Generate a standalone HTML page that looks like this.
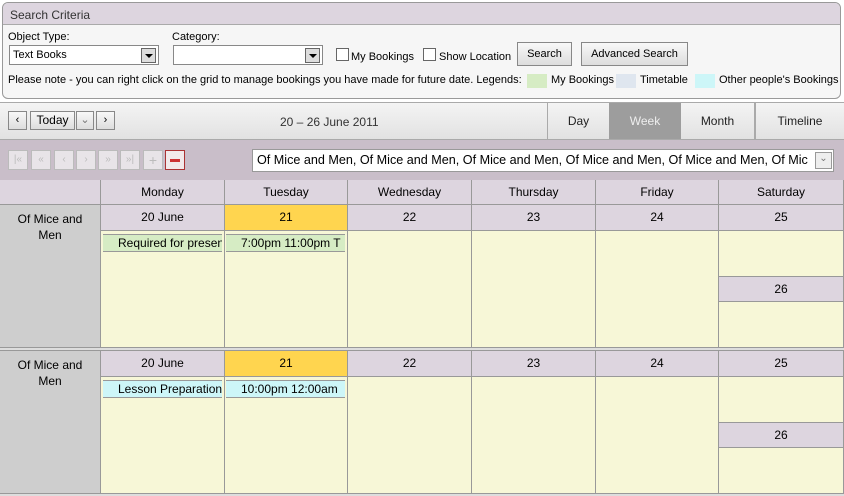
<!DOCTYPE html><html><head><style>
*{box-sizing:border-box;margin:0;padding:0}
body{width:844px;height:496px;position:relative;background:#fff;font-family:"Liberation Sans",Arial,sans-serif;font-size:12px;color:#000;overflow:hidden}
.a{position:absolute}
.btn{position:absolute;border:1px solid #888;background:linear-gradient(#f8f8f8,#ddd);font-size:11px;text-align:center}
.c{position:absolute;text-align:center;border-right:1px solid #999;border-bottom:1px solid #999}
.dd{position:absolute;width:15px;height:15px;border:1px solid #666;background:#ddd;top:2px;right:2px}
.dd:after{content:"";position:absolute;left:3px;top:5px;border:4px solid transparent;border-top:4px solid #000}
.nb{position:absolute;top:150px;width:20px;height:20px;border:1px solid #bbb;background:#e8e4e8;color:#bbb;font-size:10px;text-align:center;line-height:18px}
.ev{position:absolute;height:18px;border-top:1px solid #999;border-bottom:1px solid #999;font-size:12px;white-space:nowrap;overflow:hidden;line-height:16px;padding-left:15px}
</style></head><body>
<div class="a" style="left:2px;top:2px;width:839px;height:97px;border:1px solid #999;border-radius:6px;background:#f6f6f6;overflow:hidden">
<div class="a" style="left:0;top:0;width:100%;height:22px;background:#ddd5df;border-bottom:1px solid #aaa;color:#333;font-size:12px;padding:5px 0 0 7px">Search Criteria</div>
<div class="a" style="left:5px;top:28px;font-size:11px">Object Type:</div>
<div class="a" style="left:169px;top:28px;font-size:11px">Category:</div>
<div class="a" style="left:6px;top:42px;width:150px;height:20px;border:1px solid #888;background:#fff;font-size:11px;padding:3px 0 0 3px">Text Books<div class="dd"></div></div>
<div class="a" style="left:170px;top:42px;width:150px;height:20px;border:1px solid #888;background:#fff"><div class="dd"></div></div>
<div class="a" style="left:333px;top:45px;width:13px;height:13px;border:1px solid #666;background:#fff"></div>
<div class="a" style="left:348px;top:48px;font-size:11px">My Bookings</div>
<div class="a" style="left:420px;top:45px;width:13px;height:13px;border:1px solid #666;background:#fff"></div>
<div class="a" style="left:436px;top:48px;font-size:11px">Show Location</div>
<div class="btn" style="left:514px;top:39px;width:55px;height:24px;padding-top:5px">Search</div>
<div class="btn" style="left:578px;top:39px;width:107px;height:24px;padding-top:5px">Advanced Search</div>
<div class="a" style="left:5px;top:71px;font-size:11px;white-space:nowrap">Please note - you can right click on the grid to manage bookings you have made for future date. Legends:</div>
<div class="a" style="left:524px;top:71px;width:20px;height:14px;background:#d6ecc4"></div>
<div class="a" style="left:548px;top:71px;font-size:11px">My Bookings</div>
<div class="a" style="left:613px;top:71px;width:20px;height:14px;background:#dfe6ef"></div>
<div class="a" style="left:637px;top:71px;font-size:11px">Timetable</div>
<div class="a" style="left:692px;top:71px;width:20px;height:14px;background:#cdf6f8"></div>
<div class="a" style="left:716px;top:71px;font-size:11px">Other people's Bookings</div>
</div>
<div class="a" style="left:0;top:102px;width:844px;height:38px;background:linear-gradient(#f4f4f4,#e2e2e2);border-top:1px solid #aaa;border-bottom:1px solid #aaa"></div>
<div class="btn" style="left:8px;top:111px;width:19px;height:19px;line-height:16px">&lsaquo;</div>
<div class="btn" style="left:30px;top:111px;width:45px;height:19px;line-height:16px;font-size:12px">Today</div>
<div class="btn" style="left:76px;top:111px;width:18px;height:19px;line-height:16px;color:#777">&#8964;</div>
<div class="btn" style="left:96px;top:111px;width:19px;height:19px;line-height:16px">&rsaquo;</div>
<div class="a" style="left:280px;top:115px;color:#333">20 – 26 June 2011</div>
<div class="a" style="left:547px;top:103px;width:62px;height:36px;border-left:1px solid #aaa;text-align:center;line-height:36px;color:#222">Day</div>
<div class="a" style="left:609px;top:103px;width:72px;height:36px;background:#9d9d9d;text-align:center;line-height:36px;color:#eee">Week</div>
<div class="a" style="left:681px;top:103px;width:74px;height:36px;border-right:1px solid #aaa;text-align:center;line-height:36px;color:#222">Month</div>
<div class="a" style="left:755px;top:103px;width:89px;height:36px;border-left:1px solid #aaa;text-align:center;line-height:36px;color:#222">Timeline</div>
<div class="a" style="left:0;top:140px;width:844px;height:40px;background:#c9bec9"></div>
<div class="nb" style="left:8px">&#124;&laquo;</div><div class="nb" style="left:31px">&laquo;</div><div class="nb" style="left:54px">&lsaquo;</div><div class="nb" style="left:76px">&rsaquo;</div><div class="nb" style="left:98px">&raquo;</div><div class="nb" style="left:120px">&raquo;|</div><div class="nb" style="left:143px;font-size:14px">+</div>
<div class="nb" style="left:165px;border-color:#a33;background:#f2eaea"><div class="a" style="left:4px;top:8px;width:10px;height:3px;background:#c33"></div></div>
<div class="a" style="left:252px;top:149px;width:582px;height:23px;border:1px solid #999;background:#fff;font-size:12.6px;padding:3px 0 0 4px;white-space:nowrap;overflow:hidden">Of Mice and Men, Of Mice and Men, Of Mice and Men, Of Mice and Men, Of Mice and Men, Of Mic<div class="a" style="right:1px;top:2px;width:17px;height:17px;border:1px solid #999;background:#eee;font-size:10px;color:#777;text-align:center">&#8964;</div></div>
<div class="a" style="left:0;top:180px;width:844px;height:316px;background:#f7f7d7;border-left:1px solid #999"></div>
<div class="c" style="left:0;top:180px;width:101px;height:25px;background:#ddd5df"></div>
<div class="c" style="left:101px;top:180px;width:124px;height:25px;background:#ddd5df;line-height:24px">Monday</div>
<div class="c" style="left:225px;top:180px;width:123px;height:25px;background:#ddd5df;line-height:24px">Tuesday</div>
<div class="c" style="left:348px;top:180px;width:124px;height:25px;background:#ddd5df;line-height:24px">Wednesday</div>
<div class="c" style="left:472px;top:180px;width:124px;height:25px;background:#ddd5df;line-height:24px">Thursday</div>
<div class="c" style="left:596px;top:180px;width:123px;height:25px;background:#ddd5df;line-height:24px">Friday</div>
<div class="c" style="left:719px;top:180px;width:125px;height:25px;background:#ddd5df;line-height:24px">Saturday</div>
<div class="c" style="left:0;top:205px;width:101px;height:143px;background:#cecece;padding-top:6px;line-height:16px">Of Mice and<br>Men</div>
<div class="c" style="left:101px;top:205px;width:124px;height:26px;background:#ddd5df;line-height:25px">20 June</div>
<div class="c" style="left:225px;top:205px;width:123px;height:26px;background:#ffd54f;line-height:25px">21</div>
<div class="c" style="left:348px;top:205px;width:124px;height:26px;background:#ddd5df;line-height:25px">22</div>
<div class="c" style="left:472px;top:205px;width:124px;height:26px;background:#ddd5df;line-height:25px">23</div>
<div class="c" style="left:596px;top:205px;width:123px;height:26px;background:#ddd5df;line-height:25px">24</div>
<div class="c" style="left:719px;top:205px;width:125px;height:26px;background:#ddd5df;line-height:25px">25</div>
<div class="c" style="left:101px;top:231px;width:124px;height:117px"></div>
<div class="c" style="left:225px;top:231px;width:123px;height:117px"></div>
<div class="c" style="left:348px;top:231px;width:124px;height:117px"></div>
<div class="c" style="left:472px;top:231px;width:124px;height:117px"></div>
<div class="c" style="left:596px;top:231px;width:123px;height:117px"></div>
<div class="c" style="left:719px;top:231px;width:125px;height:117px"></div>
<div class="c" style="left:719px;top:276px;width:125px;height:26px;background:#ddd5df;border-top:1px solid #999;line-height:25px">26</div>
<div class="ev" style="left:103px;top:234px;width:119px;background:#d6ecc4">Required for presentation</div>
<div class="ev" style="left:226px;top:234px;width:119px;background:#d6ecc4">7:00pm 11:00pm T</div>
<div class="a" style="left:0;top:348px;width:844px;height:3px;background:#ddd;border-bottom:1px solid #999"></div>
<div class="c" style="left:0;top:351px;width:101px;height:143px;background:#cecece;padding-top:6px;line-height:16px">Of Mice and<br>Men</div>
<div class="c" style="left:101px;top:351px;width:124px;height:26px;background:#ddd5df;line-height:25px">20 June</div>
<div class="c" style="left:225px;top:351px;width:123px;height:26px;background:#ffd54f;line-height:25px">21</div>
<div class="c" style="left:348px;top:351px;width:124px;height:26px;background:#ddd5df;line-height:25px">22</div>
<div class="c" style="left:472px;top:351px;width:124px;height:26px;background:#ddd5df;line-height:25px">23</div>
<div class="c" style="left:596px;top:351px;width:123px;height:26px;background:#ddd5df;line-height:25px">24</div>
<div class="c" style="left:719px;top:351px;width:125px;height:26px;background:#ddd5df;line-height:25px">25</div>
<div class="c" style="left:101px;top:377px;width:124px;height:117px"></div>
<div class="c" style="left:225px;top:377px;width:123px;height:117px"></div>
<div class="c" style="left:348px;top:377px;width:124px;height:117px"></div>
<div class="c" style="left:472px;top:377px;width:124px;height:117px"></div>
<div class="c" style="left:596px;top:377px;width:123px;height:117px"></div>
<div class="c" style="left:719px;top:377px;width:125px;height:117px"></div>
<div class="c" style="left:719px;top:422px;width:125px;height:26px;background:#ddd5df;border-top:1px solid #999;line-height:25px">26</div>
<div class="ev" style="left:103px;top:380px;width:119px;background:#cdf6f8">Lesson Preparation</div>
<div class="ev" style="left:226px;top:380px;width:119px;background:#cdf6f8">10:00pm 12:00am</div>
<div class="a" style="left:0;top:494px;width:844px;height:2px;background:#ddd"></div>
</body></html>
